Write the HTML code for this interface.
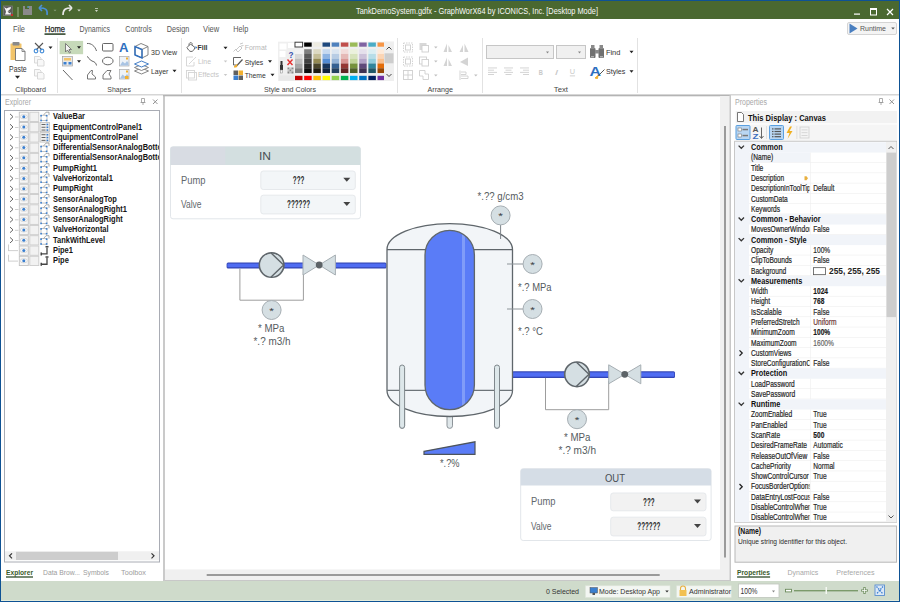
<!DOCTYPE html>
<html><head><meta charset="utf-8"><title>GraphWorX64</title>
<style>
html,body{margin:0;padding:0;width:900px;height:602px;overflow:hidden;background:#fff}
svg{display:block;font-family:"Liberation Sans",sans-serif}
</style></head><body>
<svg width="900" height="602" viewBox="0 0 900 602">
<rect x="0" y="0" width="900" height="602" fill="#0e5294" />
<rect x="1" y="1" width="898" height="18" fill="#4a6830" />
<rect x="1" y="19" width="898" height="582" fill="#ffffff" />
<text x="356" y="14.4" font-size="9.8" fill="#f8f8f8" font-weight="normal" textLength="242.0" lengthAdjust="spacingAndGlyphs" >TankDemoSystem.gdfx - GraphWorX64 by ICONICS, Inc. [Desktop Mode]</text>
<rect x="3.3" y="6" width="9" height="9.5" fill="#5a5a5a" stroke="#7a7a7a" stroke-width="0.8" />
<path d="M4,7 L6.5,8.5 L8.5,7.5 L11,7 L10.5,9 L8.5,10.5 L7.5,12 L9.5,11.5 L10.8,12.5 L10.8,14.5 L5,14.5 L6,12 L5.5,10 Z" fill="#f4f4f4" />
<path d="M8,12.5 L10.5,11 L10.5,13.5 Z" fill="#555" />
<circle cx="12" cy="15" r="1.1" fill="#e02020" />
<line x1="18" y1="7" x2="18" y2="17" stroke="#9fb58c" stroke-width="1" />
<path d="M23,6 L32,6 L32,15 L23,15 Z" fill="#8a8a8a" />
<rect x="25" y="6" width="4" height="3" fill="#4a6830" />
<rect x="27.5" y="6" width="1.2" height="2" fill="#5aa0e0" />
<path d="M47,15 C48,9 45,8 40,8" fill="none" stroke="#4a90d9" stroke-width="1.6" />
<path d="M39,8 L42,5 M39,8 L42,11" fill="none" stroke="#4a90d9" stroke-width="1.6" />
<path d="M53.5,9.75 L56.5,9.75 L55,11.25 Z" fill="#8aa07a" />
<path d="M63,15 C63,9 66,8 71,8" fill="none" stroke="#e8e8e8" stroke-width="1.6" />
<path d="M72,8 L69,5 M72,8 L69,11" fill="none" stroke="#e8e8e8" stroke-width="1.6" />
<path d="M77.25,9.5 L80.75,9.5 L79,11.5 Z" fill="#d0d8c8" />
<rect x="95" y="8" width="3" height="0.8" fill="#d0d8c8" />
<path d="M95.0,10.0 L98.0,10.0 L96.5,12.0 Z" fill="#d0d8c8" />
<rect x="854" y="13.5" width="6" height="1.2" fill="#ffffff" />
<rect x="870.5" y="8.5" width="6" height="6.5" fill="none" stroke="#ffffff" stroke-width="1" />
<rect x="870.5" y="8.5" width="6" height="1.5" fill="#ffffff" />
<path d="M887,9 L893,15 M893,9 L887,15" fill="none" stroke="#ffffff" stroke-width="1.2" />
<text x="13" y="31.7" font-size="8.6" fill="#555555" font-weight="normal" textLength="12.0" lengthAdjust="spacingAndGlyphs" >File</text>
<text x="44.8" y="31.7" font-size="8.6" fill="#1f1f1f" font-weight="normal" textLength="20.2" lengthAdjust="spacingAndGlyphs" stroke="#1f1f1f" stroke-width="0.25">Home</text>
<text x="79.5" y="31.7" font-size="8.6" fill="#555555" font-weight="normal" textLength="30.5" lengthAdjust="spacingAndGlyphs" >Dynamics</text>
<text x="125.3" y="31.7" font-size="8.6" fill="#555555" font-weight="normal" textLength="26.4" lengthAdjust="spacingAndGlyphs" >Controls</text>
<text x="166.7" y="31.7" font-size="8.6" fill="#555555" font-weight="normal" textLength="22.5" lengthAdjust="spacingAndGlyphs" >Design</text>
<text x="203" y="31.7" font-size="8.6" fill="#555555" font-weight="normal" textLength="16.2" lengthAdjust="spacingAndGlyphs" >View</text>
<text x="233.3" y="31.7" font-size="8.6" fill="#555555" font-weight="normal" textLength="15.0" lengthAdjust="spacingAndGlyphs" >Help</text>
<rect x="44.5" y="33.2" width="21" height="1.8" fill="#4a5c46" />
<rect x="847.5" y="22.5" width="49" height="12" fill="#f4f4f4" stroke="#d4d4d4" stroke-width="1" rx="1.5" />
<path d="M849.5,23.5 L857.5,28.5 L849.5,33.5 Z" fill="#4a7fc0" />
<text x="860" y="31.3" font-size="8" fill="#555" font-weight="normal" textLength="26.0" lengthAdjust="spacingAndGlyphs" >Runtime</text>
<path d="M891.25,27.5 L894.75,27.5 L893,29.5 Z" fill="#555" />
<rect x="1" y="94" width="898" height="1.5" fill="#d6d6d6" />
<rect x="57" y="38" width="1" height="55" fill="#e2e2e2" />
<rect x="181" y="38" width="1" height="55" fill="#e2e2e2" />
<rect x="397" y="38" width="1" height="55" fill="#e2e2e2" />
<rect x="482" y="38" width="1" height="55" fill="#e2e2e2" />
<rect x="637" y="38" width="1" height="55" fill="#e2e2e2" />
<text x="15.2" y="92" font-size="7.8" fill="#444" font-weight="normal" textLength="30.8" lengthAdjust="spacingAndGlyphs" >Clipboard</text>
<text x="107.3" y="92" font-size="7.8" fill="#444" font-weight="normal" textLength="23.6" lengthAdjust="spacingAndGlyphs" >Shapes</text>
<text x="264" y="92" font-size="7.8" fill="#444" font-weight="normal" textLength="52.0" lengthAdjust="spacingAndGlyphs" >Style and Colors</text>
<text x="427.5" y="92" font-size="7.8" fill="#444" font-weight="normal" textLength="25.5" lengthAdjust="spacingAndGlyphs" >Arrange</text>
<text x="553.8" y="92" font-size="7.8" fill="#444" font-weight="normal" textLength="14.2" lengthAdjust="spacingAndGlyphs" >Text</text>
<rect x="10.5" y="43.5" width="11" height="16.5" fill="#f2c46a" rx="0.5" />
<rect x="12.5" y="42" width="7" height="3.5" fill="#8a8a8a" rx="0.8" />
<path d="M15.5,48.5 L22,48.5 L25,51.5 L25,60.5 L15.5,60.5 Z" fill="#ffffff" stroke="#707070" stroke-width="0.9" />
<path d="M22,48.5 L22,51.5 L25,51.5" fill="none" stroke="#707070" stroke-width="0.8" />
<text x="9.1" y="72" font-size="9" fill="#333" font-weight="normal" textLength="17.6" lengthAdjust="spacingAndGlyphs" >Paste</text>
<path d="M15.0,75.8 L20.0,75.8 L17.5,78.8 Z" fill="#222" />
<path d="M35,43 L42,50 M43,43 L36,50" fill="none" stroke="#555" stroke-width="1.1" />
<circle cx="36" cy="51" r="1.8" fill="none" stroke="#4a90d9" stroke-width="1.2" />
<circle cx="42" cy="51" r="1.8" fill="none" stroke="#4a90d9" stroke-width="1.2" />
<path d="M48.5,46.45 L52.5,46.45 L50.5,48.95 Z" fill="#222" />
<path d="M34.5,56.5 L39.5,56.5 L41,58 L41,63 L34.5,63 Z" fill="#f8f8f8" stroke="#d0d0d0" stroke-width="0.8" />
<path d="M37.5,59.5 L42.5,59.5 L44,61 L44,66 L37.5,66 Z" fill="#f8f8f8" stroke="#d0d0d0" stroke-width="0.8" />
<path d="M34.5,69.5 L39.5,69.5 L41,71 L41,76 L34.5,76 Z" fill="#f8f8f8" stroke="#d0d0d0" stroke-width="0.8" />
<path d="M37.5,72.5 L42.5,72.5 L44,74 L44,79 L37.5,79 Z" fill="#f8f8f8" stroke="#d0d0d0" stroke-width="0.8" />
<rect x="59.6" y="40.9" width="23.5" height="13.3" fill="#c6d9b9" />
<path d="M65.5,43.5 L65.5,52 L67.5,50 L69.5,53 L70.5,52.5 L69,49.5 L71.5,49.5 Z" fill="#f4f4f4" stroke="#666" stroke-width="0.8" />
<path d="M77.0,46.35 L81.0,46.35 L79,48.85 Z" fill="#222" />
<rect x="62.5" y="56.5" width="10" height="9.5" fill="#e8e8e8" stroke="#a0a0a0" stroke-width="0.7" />
<rect x="64" y="58" width="7" height="2.5" fill="#f2c46a" />
<rect x="63.5" y="62" width="3" height="2.5" fill="#3a7fd0" />
<rect x="68.5" y="62" width="3" height="2.5" fill="#3a7fd0" />
<path d="M77.0,60.25 L81.0,60.25 L79,62.75 Z" fill="#222" />
<line x1="63" y1="70" x2="72.5" y2="80" stroke="#666" stroke-width="1" />
<path d="M87,43.5 C91,43 95,46 96.5,51" fill="none" stroke="#666" stroke-width="1" />
<path d="M87,56.5 C89,57 89,60 92,61 C95,62 96,63 96.5,65.5" fill="none" stroke="#666" stroke-width="1" />
<path d="M87.5,79 L87.5,75 L91,70.5 L92.5,70.5 L92,74 L95.5,77 L95.5,79 Z" fill="none" stroke="#666" stroke-width="0.9" />
<rect x="102.5" y="43.5" width="10.5" height="7.5" fill="none" stroke="#666" stroke-width="1" rx="1" />
<ellipse cx="107.8" cy="61" rx="5.3" ry="3.8" fill="none" stroke="#666" stroke-width="1"/>
<path d="M103,79 L103,75 L107,70.5 L111,70.5 L109,74 L111,77 L111,79 Z" fill="none" stroke="#666" stroke-width="0.9" />
<text x="119" y="52" font-size="12.5" fill="#2f6fbf" font-weight="bold" textLength="9.5" lengthAdjust="spacingAndGlyphs" >A</text>
<rect x="119.5" y="56.5" width="9.5" height="9.5" fill="#eef3f8" stroke="#a8a8a8" stroke-width="0.7" />
<path d="M120,65.5 L122.5,61.5 L125,63.5 L127,61 L128.5,63 L128.5,65.5 Z" fill="#a9c4e4" />
<rect x="126" y="57.5" width="2" height="2" fill="#f2b030" />
<rect x="119.5" y="69.5" width="9.5" height="9.5" fill="#eef3f8" stroke="#a8a8a8" stroke-width="0.7" />
<path d="M120,78.5 L122.5,74.5 L125,76.5 L127,74 L128.5,76 L128.5,78.5 Z" fill="#a9c4e4" />
<rect x="126" y="70.5" width="2" height="2" fill="#f2b030" />
<rect x="125" y="76" width="3.5" height="3" fill="#f2b030" />
<path d="M135,46.5 L141,43.5 L148,46.5 L148,55 L142,58 L135,55 Z" fill="#fff" stroke="#777" stroke-width="0.9" />
<path d="M135,46.5 L142,49.5 L148,46.5 M142,49.5 L142,58" fill="none" stroke="#777" stroke-width="0.9" />
<path d="M135,46.5 L135,55 L142,58 L142,49.5 Z" fill="none" stroke="#2f6fbf" stroke-width="1.4" />
<text x="151" y="54.5" font-size="7.8" fill="#333" font-weight="normal" textLength="26.0" lengthAdjust="spacingAndGlyphs" >3D View</text>
<path d="M134.5,71.0 L141.5,68.0 L148.5,71.0 L141.5,74.0 Z" fill="#fff" stroke="#777" stroke-width="0.9" />
<path d="M134.5,67.5 L141.5,64.5 L148.5,67.5 L141.5,70.5 Z" fill="#fff" stroke="#777" stroke-width="0.9" />
<path d="M134.5,64.0 L141.5,61.0 L148.5,64.0 L141.5,67.0 Z" fill="#fff" stroke="#2f6fbf" stroke-width="0.9" />
<text x="151" y="74" font-size="7.8" fill="#333" font-weight="normal" textLength="17.3" lengthAdjust="spacingAndGlyphs" >Layer</text>
<path d="M172.5,69.75 L176.5,69.75 L174.5,72.25 Z" fill="#222" />
<path d="M187,47.5 L190.5,44 L195,47.5 C194,50 193,51.5 191,51.5 C189.5,51.5 188,49.5 187,47.5 Z" fill="#fff" stroke="#555" stroke-width="0.9" />
<path d="M189,45.5 C188.5,42 192,41.5 192.5,44.5" fill="none" stroke="#555" stroke-width="0.8" />
<path d="M195.5,46 L197.5,47.5 L195.5,49 Z" fill="#3a7fd0" />
<text x="197.5" y="50" font-size="7.8" fill="#333" font-weight="bold" textLength="10.0" lengthAdjust="spacingAndGlyphs" >Fill</text>
<path d="M223.5,46.75 L227.5,46.75 L225.5,49.25 Z" fill="#222" />
<path d="M186.5,57 L193,57 M186.5,57 L186.5,66 L194,66 L194,62 M189,64 L196,57" fill="none" stroke="#d4d4d4" stroke-width="0.9" />
<text x="198" y="63.8" font-size="7.8" fill="#c4c4c4" font-weight="normal" textLength="13.0" lengthAdjust="spacingAndGlyphs" >Line</text>
<path d="M223.75,60.5 L227.25,60.5 L225.5,62.5 Z" fill="#c8c8c8" />
<rect x="186.5" y="70.5" width="8" height="7.5" fill="none" stroke="#d4d4d4" stroke-width="0.9" />
<rect x="188.5" y="72.5" width="8" height="7.5" fill="none" stroke="#d4d4d4" stroke-width="0.9" />
<text x="198" y="77.3" font-size="7.8" fill="#c4c4c4" font-weight="normal" textLength="21.0" lengthAdjust="spacingAndGlyphs" >Effects</text>
<path d="M223.75,74.0 L227.25,74.0 L225.5,76.0 Z" fill="#c8c8c8" />
<path d="M233.5,51.5 L236,49 M236,50 L240,46 L242,48 L238,52 Z M240,44 L243,43 M241,46 L243.5,45.5" fill="none" stroke="#c8c8c8" stroke-width="1" />
<text x="244.7" y="49.8" font-size="7.8" fill="#b8b8b8" font-weight="normal" textLength="22.0" lengthAdjust="spacingAndGlyphs" >Format</text>
<path d="M233.5,57.5 L241,57.5 M233.5,57.5 L233.5,65 L236,65" fill="none" stroke="#555" stroke-width="0.9" />
<path d="M236,66.5 L242.5,59.5" fill="none" stroke="#555" stroke-width="1.2" />
<path d="M234,67 L237,64.5 L236.5,67 Z" fill="#f2b030" stroke="#f2b030" stroke-width="1" />
<text x="244.7" y="64.6" font-size="7.8" fill="#333" font-weight="normal" textLength="18.6" lengthAdjust="spacingAndGlyphs" >Styles</text>
<path d="M268.0,60.25 L272.0,60.25 L270,62.75 Z" fill="#222" />
<rect x="233.5" y="70.5" width="4.5" height="4.5" fill="#606060" />
<rect x="238.5" y="70.5" width="4.5" height="4.5" fill="#f2b030" />
<rect x="233.5" y="75.5" width="4.5" height="4.5" fill="#3a7fd0" />
<rect x="238.5" y="75.5" width="4.5" height="4.5" fill="#606060" />
<text x="244.7" y="78.1" font-size="7.8" fill="#333" font-weight="normal" textLength="21.1" lengthAdjust="spacingAndGlyphs" >Theme</text>
<path d="M270.5,73.75 L274.5,73.75 L272.5,76.25 Z" fill="#222" />
<rect x="278" y="41.7" width="116" height="39.3" fill="#efefef" />
<rect x="279.5" y="43.5" width="7" height="6" fill="#fff" />
<rect x="288" y="43" width="6" height="5" fill="#fff" />
<rect x="279.5" y="51" width="6" height="6" fill="#fff" />
<text x="288.5" y="57.5" font-size="9" fill="#3a4fb0" font-weight="bold" textLength="5.0" lengthAdjust="spacingAndGlyphs" >?</text>
<path d="M280.5,61 L282.5,61 L282.5,65 L283,65 L283,70 L280,70 L280,65 L280.5,65 Z" fill="#333" />
<rect x="280.5" y="70" width="2" height="3" fill="#f8f8f8" stroke="#888" stroke-width="0.5" />
<path d="M287.5,59.5 L292.5,65 M292.5,59.5 L287.5,65" fill="none" stroke="#e53030" stroke-width="1.4" />
<rect x="287.5" y="67.5" width="2" height="2" fill="#8a8a8a" />
<rect x="287.5" y="69.5" width="2" height="2" fill="#c8c8c8" />
<rect x="287.5" y="71.5" width="2" height="2" fill="#8a8a8a" />
<rect x="289.5" y="67.5" width="2" height="2" fill="#c8c8c8" />
<rect x="289.5" y="69.5" width="2" height="2" fill="#8a8a8a" />
<rect x="289.5" y="71.5" width="2" height="2" fill="#c8c8c8" />
<rect x="291.5" y="67.5" width="2" height="2" fill="#8a8a8a" />
<rect x="291.5" y="69.5" width="2" height="2" fill="#c8c8c8" />
<rect x="291.5" y="71.5" width="2" height="2" fill="#8a8a8a" />
<rect x="279" y="75.5" width="15" height="5" fill="#e8e8e8" />
<rect x="295.0" y="42.5" width="7.5" height="4.2" fill="#ffffff" />
<rect x="295.0" y="49.2" width="7.5" height="4.8" fill="#f2f2f2" />
<rect x="295.0" y="53.96" width="7.5" height="4.8" fill="#d9d9d9" />
<rect x="295.0" y="58.72" width="7.5" height="4.8" fill="#bfbfbf" />
<rect x="295.0" y="63.480000000000004" width="7.5" height="4.8" fill="#a6a6a6" />
<rect x="295.0" y="68.24000000000001" width="7.5" height="4.8" fill="#808080" />
<rect x="295.0" y="75.8" width="7.5" height="4.3" fill="#c00000" />
<rect x="304.17" y="42.5" width="7.5" height="4.2" fill="#000000" />
<rect x="304.17" y="49.2" width="7.5" height="4.8" fill="#7f7f7f" />
<rect x="304.17" y="53.96" width="7.5" height="4.8" fill="#595959" />
<rect x="304.17" y="58.72" width="7.5" height="4.8" fill="#404040" />
<rect x="304.17" y="63.480000000000004" width="7.5" height="4.8" fill="#262626" />
<rect x="304.17" y="68.24000000000001" width="7.5" height="4.8" fill="#0d0d0d" />
<rect x="304.17" y="75.8" width="7.5" height="4.3" fill="#ff0000" />
<rect x="313.34" y="42.5" width="7.5" height="4.2" fill="#eeece1" />
<rect x="313.34" y="49.2" width="7.5" height="4.8" fill="#ddd9c3" />
<rect x="313.34" y="53.96" width="7.5" height="4.8" fill="#c4bd97" />
<rect x="313.34" y="58.72" width="7.5" height="4.8" fill="#948a54" />
<rect x="313.34" y="63.480000000000004" width="7.5" height="4.8" fill="#4a452a" />
<rect x="313.34" y="68.24000000000001" width="7.5" height="4.8" fill="#1d1b10" />
<rect x="313.34" y="75.8" width="7.5" height="4.3" fill="#ffc000" />
<rect x="322.51" y="42.5" width="7.5" height="4.2" fill="#1f497d" />
<rect x="322.51" y="49.2" width="7.5" height="4.8" fill="#c6d9f0" />
<rect x="322.51" y="53.96" width="7.5" height="4.8" fill="#8db3e2" />
<rect x="322.51" y="58.72" width="7.5" height="4.8" fill="#548dd4" />
<rect x="322.51" y="63.480000000000004" width="7.5" height="4.8" fill="#17365d" />
<rect x="322.51" y="68.24000000000001" width="7.5" height="4.8" fill="#0f243e" />
<rect x="322.51" y="75.8" width="7.5" height="4.3" fill="#ffff00" />
<rect x="331.68" y="42.5" width="7.5" height="4.2" fill="#4f81bd" />
<rect x="331.68" y="49.2" width="7.5" height="4.8" fill="#dbe5f1" />
<rect x="331.68" y="53.96" width="7.5" height="4.8" fill="#b8cce4" />
<rect x="331.68" y="58.72" width="7.5" height="4.8" fill="#95b3d7" />
<rect x="331.68" y="63.480000000000004" width="7.5" height="4.8" fill="#366092" />
<rect x="331.68" y="68.24000000000001" width="7.5" height="4.8" fill="#244061" />
<rect x="331.68" y="75.8" width="7.5" height="4.3" fill="#92d050" />
<rect x="340.85" y="42.5" width="7.5" height="4.2" fill="#c0504d" />
<rect x="340.85" y="49.2" width="7.5" height="4.8" fill="#f2dcdb" />
<rect x="340.85" y="53.96" width="7.5" height="4.8" fill="#e5b9b7" />
<rect x="340.85" y="58.72" width="7.5" height="4.8" fill="#d99694" />
<rect x="340.85" y="63.480000000000004" width="7.5" height="4.8" fill="#953734" />
<rect x="340.85" y="68.24000000000001" width="7.5" height="4.8" fill="#632423" />
<rect x="340.85" y="75.8" width="7.5" height="4.3" fill="#00b050" />
<rect x="350.02" y="42.5" width="7.5" height="4.2" fill="#9bbb59" />
<rect x="350.02" y="49.2" width="7.5" height="4.8" fill="#ebf1dd" />
<rect x="350.02" y="53.96" width="7.5" height="4.8" fill="#d7e3bc" />
<rect x="350.02" y="58.72" width="7.5" height="4.8" fill="#c3d69b" />
<rect x="350.02" y="63.480000000000004" width="7.5" height="4.8" fill="#76923c" />
<rect x="350.02" y="68.24000000000001" width="7.5" height="4.8" fill="#4f6128" />
<rect x="350.02" y="75.8" width="7.5" height="4.3" fill="#00b0f0" />
<rect x="359.19" y="42.5" width="7.5" height="4.2" fill="#8064a2" />
<rect x="359.19" y="49.2" width="7.5" height="4.8" fill="#e5e0ec" />
<rect x="359.19" y="53.96" width="7.5" height="4.8" fill="#ccc1d9" />
<rect x="359.19" y="58.72" width="7.5" height="4.8" fill="#b2a2c7" />
<rect x="359.19" y="63.480000000000004" width="7.5" height="4.8" fill="#5f497a" />
<rect x="359.19" y="68.24000000000001" width="7.5" height="4.8" fill="#3f3151" />
<rect x="359.19" y="75.8" width="7.5" height="4.3" fill="#0070c0" />
<rect x="368.36" y="42.5" width="7.5" height="4.2" fill="#4bacc6" />
<rect x="368.36" y="49.2" width="7.5" height="4.8" fill="#dbeef3" />
<rect x="368.36" y="53.96" width="7.5" height="4.8" fill="#b7dde8" />
<rect x="368.36" y="58.72" width="7.5" height="4.8" fill="#92cddc" />
<rect x="368.36" y="63.480000000000004" width="7.5" height="4.8" fill="#31859b" />
<rect x="368.36" y="68.24000000000001" width="7.5" height="4.8" fill="#205867" />
<rect x="368.36" y="75.8" width="7.5" height="4.3" fill="#002060" />
<rect x="377.53" y="42.5" width="7.5" height="4.2" fill="#f79646" />
<rect x="377.53" y="49.2" width="7.5" height="4.8" fill="#fdeada" />
<rect x="377.53" y="53.96" width="7.5" height="4.8" fill="#fbd5b5" />
<rect x="377.53" y="58.72" width="7.5" height="4.8" fill="#fac08f" />
<rect x="377.53" y="63.480000000000004" width="7.5" height="4.8" fill="#e36c09" />
<rect x="377.53" y="68.24000000000001" width="7.5" height="4.8" fill="#974806" />
<rect x="377.53" y="75.8" width="7.5" height="4.3" fill="#7030a0" />
<rect x="295" y="42.2" width="7.6" height="4.8" fill="none" stroke="#333" stroke-width="0.9" />
<rect x="384" y="41.7" width="10" height="39.3" fill="#efefef" />
<path d="M386.5,49.5 L389,47 L391.5,49.5" fill="none" stroke="#333" stroke-width="0.9" />
<rect x="384.5" y="53.3" width="9" height="10" fill="#cdcdcd" />
<path d="M386.5,74 L389,76.5 L391.5,74" fill="none" stroke="#333" stroke-width="0.9" />
<rect x="403.5" y="43" width="9" height="9" fill="none" stroke="#cfcfcf" stroke-width="0.9" stroke-dasharray="1.5,1"/>
<rect x="405.5" y="45" width="5" height="5" fill="none" stroke="#cfcfcf" stroke-width="0.9" />
<rect x="403.5" y="57" width="9" height="9" fill="none" stroke="#cfcfcf" stroke-width="0.9" stroke-dasharray="1.5,1"/>
<rect x="405.5" y="59" width="5" height="5" fill="none" stroke="#cfcfcf" stroke-width="0.9" />
<rect x="403.5" y="70.5" width="9" height="9" fill="none" stroke="#cfcfcf" stroke-width="0.9" />
<line x1="408" y1="71" x2="408" y2="79" stroke="#cfcfcf" stroke-width="0.9" />
<line x1="404" y1="75" x2="412" y2="75" stroke="#cfcfcf" stroke-width="0.9" />
<rect x="419.5" y="43" width="7" height="7" fill="#d8d8d8" />
<rect x="422" y="45.5" width="6.5" height="6.5" fill="#fff" stroke="#cfcfcf" stroke-width="0.9" />
<rect x="419.5" y="57" width="7" height="7" fill="none" stroke="#cfcfcf" stroke-width="0.9" />
<rect x="422" y="59.5" width="6.5" height="6.5" fill="#fff" stroke="#cfcfcf" stroke-width="0.9" />
<path d="M419.5,70.5 L425,70.5 L425,74 L428.5,74 L428.5,79.5 L423,79.5 L423,76 L419.5,76 Z" fill="none" stroke="#cfcfcf" stroke-width="0.9" />
<path d="M434.05,46.5 L437.55,46.5 L435.8,48.5 Z" fill="#c0c0c0" />
<path d="M434.05,60.5 L437.55,60.5 L435.8,62.5 Z" fill="#c0c0c0" />
<path d="M434.05,74.5 L437.55,74.5 L435.8,76.5 Z" fill="#c0c0c0" />
<path d="M447,43.5 L447,52 L443.5,52 Z M448.5,45 L452,52 L448.5,52 Z" fill="#d4d4d4" />
<path d="M463,45 L463,52 L459.5,52 Z M464.5,43.5 L468.5,52 L464.5,52 Z" fill="#d4d4d4" />
<path d="M447,57.5 L447,66 L443.5,66 Z M448.5,59 L452,66 L448.5,66 Z" fill="#d4d4d4" />
<path d="M468,57.5 L468,66 L460,62 Z" fill="#d4d4d4" />
<path d="M460,70.5 L460,80 M461,72 L466,72 L466,74.5 L461,74.5 M461,76 L468,76 L468,78.5 L461,78.5" fill="none" stroke="#cfcfcf" stroke-width="0.9" />
<path d="M474.05,74.5 L477.55,74.5 L475.8,76.5 Z" fill="#c0c0c0" />
<rect x="486.5" y="45.5" width="67" height="13" fill="#f0f0f0" stroke="#c6c6c6" stroke-width="1" />
<path d="M546.0,51.6 L549.0,51.6 L547.5,53.4 Z" fill="#888" />
<rect x="556.5" y="45.5" width="29" height="13" fill="#f0f0f0" stroke="#c6c6c6" stroke-width="1" />
<path d="M578.0,51.6 L581.0,51.6 L579.5,53.4 Z" fill="#888" />
<rect x="488" y="67.5" width="9" height="0.9" fill="#d0d0d0" />
<rect x="488" y="69.7" width="6" height="0.9" fill="#d0d0d0" />
<rect x="488" y="71.9" width="9" height="0.9" fill="#d0d0d0" />
<rect x="488" y="74.1" width="6" height="0.9" fill="#d0d0d0" />
<rect x="504.0" y="67.5" width="9" height="0.9" fill="#d0d0d0" />
<rect x="505.5" y="69.7" width="6" height="0.9" fill="#d0d0d0" />
<rect x="504.0" y="71.9" width="9" height="0.9" fill="#d0d0d0" />
<rect x="505.5" y="74.1" width="6" height="0.9" fill="#d0d0d0" />
<rect x="520" y="67.5" width="9" height="0.9" fill="#d0d0d0" />
<rect x="523" y="69.7" width="6" height="0.9" fill="#d0d0d0" />
<rect x="520" y="71.9" width="9" height="0.9" fill="#d0d0d0" />
<rect x="523" y="74.1" width="6" height="0.9" fill="#d0d0d0" />
<text x="538.7" y="75" font-size="8" fill="#c8c8c8" font-weight="bold" textLength="4.1" lengthAdjust="spacingAndGlyphs" >B</text>
<text x="554.7" y="75" font-size="8" fill="#c8c8c8" font-weight="normal" textLength="3.5" lengthAdjust="spacingAndGlyphs" font-style="italic">I</text>
<text x="569.8" y="74" font-size="8" fill="#c8c8c8" font-weight="normal" textLength="5.3" lengthAdjust="spacingAndGlyphs" >U</text>
<rect x="569.8" y="75.5" width="5.3" height="0.8" fill="#c8c8c8" />
<rect x="590" y="48" width="5.5" height="10" fill="#707070" rx="1" />
<rect x="598.5" y="48" width="5.5" height="10" fill="#707070" rx="1" />
<rect x="591" y="45" width="3.5" height="4" fill="#8a8a8a" />
<rect x="599.5" y="45" width="3.5" height="4" fill="#8a8a8a" />
<rect x="595" y="50" width="4" height="3.5" fill="#8a8a8a" />
<rect x="591" y="56" width="3" height="1.5" fill="#b0b0b0" />
<rect x="600" y="56" width="3" height="1.5" fill="#b0b0b0" />
<text x="605.9" y="54.6" font-size="7.8" fill="#333" font-weight="normal" textLength="14.5" lengthAdjust="spacingAndGlyphs" >Find</text>
<path d="M629.5,50.75 L633.5,50.75 L631.5,53.25 Z" fill="#222" />
<text x="589.5" y="76" font-size="13.5" fill="#2f6fbf" font-weight="bold" textLength="11.5" lengthAdjust="spacingAndGlyphs" >A</text>
<path d="M597,77 L604.5,69.5" fill="none" stroke="#555" stroke-width="1" />
<path d="M595,78 L598,75.5 L597.5,78.5 Z" fill="#f2b030" stroke="#f2b030" stroke-width="1" />
<text x="605.9" y="74.1" font-size="7.8" fill="#333" font-weight="normal" textLength="19.5" lengthAdjust="spacingAndGlyphs" >Styles</text>
<path d="M629.5,70.25 L633.5,70.25 L631.5,72.75 Z" fill="#222" />
<text x="5" y="104.7" font-size="8.5" fill="#a8a8a8" font-weight="normal" textLength="26.0" lengthAdjust="spacingAndGlyphs" >Explorer</text>
<path d="M141.5,98.5 L144.5,98.5 L144.5,102.5 L141.5,102.5 Z M140.5,102.5 L145.5,102.5 M143,102.5 L143,105" fill="none" stroke="#999" stroke-width="0.8" />
<path d="M153,99.5 L157.5,104 M157.5,99.5 L153,104" fill="none" stroke="#888" stroke-width="0.9" />
<rect x="4.5" y="110.5" width="155" height="451.5" fill="#fff" stroke="#a9acb4" stroke-width="1" />
<clipPath id="treeclip"><rect x="5" y="111" width="154" height="440"/></clipPath>
<g clip-path="url(#treeclip)">
<path d="M10,113.9 L13,116.7 L10,119.5" fill="none" stroke="#666" stroke-width="1" />
<rect x="15" y="116.7" width="3.5" height="0.6" fill="#b0b0b0" />
<rect x="19.3" y="112.2" width="9" height="9.3" fill="#f6f6f6" stroke="#c2c2c2" stroke-width="0.9" />
<ellipse cx="23.8" cy="116.7" rx="3.6" ry="2.1" fill="#fafafa" stroke="#c4c4c4" stroke-width="0.6"/>
<circle cx="23.8" cy="116.7" r="1.5" fill="#3a7fd0" />
<rect x="29.8" y="112.2" width="9" height="9.3" fill="#f2f2f2" stroke="#cbcbcb" stroke-width="0.9" />
<path d="M43,115.7 L46,112.2 L49,112.2 L49,115.2" fill="none" stroke="#888" stroke-width="0.7" />
<rect x="41" y="115.2" width="6" height="5.5" fill="#fff" stroke="#999" stroke-width="0.6" />
<rect x="40.3" y="114.9" width="1.6" height="1.6" fill="#3a7fd0" />
<rect x="45.8" y="114.9" width="1.6" height="1.6" fill="#3a7fd0" />
<rect x="40.3" y="119.7" width="1.6" height="1.6" fill="#3a7fd0" />
<rect x="45.8" y="119.7" width="1.6" height="1.6" fill="#3a7fd0" />
<text x="53" y="119.3" font-size="9" fill="#151515" font-weight="bold" textLength="32.0" lengthAdjust="spacingAndGlyphs" >ValueBar</text>
<path d="M10,124.19000000000001 L13,126.99000000000001 L10,129.79000000000002" fill="none" stroke="#666" stroke-width="1" />
<rect x="15" y="126.99000000000001" width="3.5" height="0.6" fill="#b0b0b0" />
<rect x="19.3" y="122.49000000000001" width="9" height="9.3" fill="#f6f6f6" stroke="#c2c2c2" stroke-width="0.9" />
<ellipse cx="23.8" cy="126.99000000000001" rx="3.6" ry="2.1" fill="#fafafa" stroke="#c4c4c4" stroke-width="0.6"/>
<circle cx="23.8" cy="126.99000000000001" r="1.5" fill="#3a7fd0" />
<rect x="29.8" y="122.49000000000001" width="9" height="9.3" fill="#f2f2f2" stroke="#cbcbcb" stroke-width="0.9" />
<rect x="40" y="122.49000000000001" width="9.5" height="9.3" fill="#f0f0f0" stroke="#aaa" stroke-width="0.6" />
<rect x="41.5" y="123.99000000000001" width="4" height="0.9" fill="#555" />
<rect x="46.5" y="123.69000000000001" width="1.8" height="1.6" fill="#3a7fd0" />
<rect x="41.5" y="126.79" width="4" height="0.9" fill="#555" />
<rect x="46.5" y="126.49000000000001" width="1.8" height="1.6" fill="#3a7fd0" />
<rect x="41.5" y="129.59" width="4" height="0.9" fill="#555" />
<rect x="46.5" y="129.29000000000002" width="1.8" height="1.6" fill="#3a7fd0" />
<text x="53" y="129.59" font-size="9" fill="#151515" font-weight="bold" textLength="89.2" lengthAdjust="spacingAndGlyphs" >EquipmentControlPanel1</text>
<path d="M10,134.48 L13,137.28 L10,140.08" fill="none" stroke="#666" stroke-width="1" />
<rect x="15" y="137.28" width="3.5" height="0.6" fill="#b0b0b0" />
<rect x="19.3" y="132.78" width="9" height="9.3" fill="#f6f6f6" stroke="#c2c2c2" stroke-width="0.9" />
<ellipse cx="23.8" cy="137.28" rx="3.6" ry="2.1" fill="#fafafa" stroke="#c4c4c4" stroke-width="0.6"/>
<circle cx="23.8" cy="137.28" r="1.5" fill="#3a7fd0" />
<rect x="29.8" y="132.78" width="9" height="9.3" fill="#f2f2f2" stroke="#cbcbcb" stroke-width="0.9" />
<rect x="40" y="132.78" width="9.5" height="9.3" fill="#f0f0f0" stroke="#aaa" stroke-width="0.6" />
<rect x="41.5" y="134.28" width="4" height="0.9" fill="#555" />
<rect x="46.5" y="133.98" width="1.8" height="1.6" fill="#3a7fd0" />
<rect x="41.5" y="137.08" width="4" height="0.9" fill="#555" />
<rect x="46.5" y="136.78" width="1.8" height="1.6" fill="#3a7fd0" />
<rect x="41.5" y="139.88" width="4" height="0.9" fill="#555" />
<rect x="46.5" y="139.57999999999998" width="1.8" height="1.6" fill="#3a7fd0" />
<text x="53" y="139.88" font-size="9" fill="#151515" font-weight="bold" textLength="85.1" lengthAdjust="spacingAndGlyphs" >EquipmentControlPanel</text>
<path d="M10,144.76999999999998 L13,147.57 L10,150.37" fill="none" stroke="#666" stroke-width="1" />
<rect x="15" y="147.57" width="3.5" height="0.6" fill="#b0b0b0" />
<rect x="19.3" y="143.07" width="9" height="9.3" fill="#f6f6f6" stroke="#c2c2c2" stroke-width="0.9" />
<ellipse cx="23.8" cy="147.57" rx="3.6" ry="2.1" fill="#fafafa" stroke="#c4c4c4" stroke-width="0.6"/>
<circle cx="23.8" cy="147.57" r="1.5" fill="#3a7fd0" />
<rect x="29.8" y="143.07" width="9" height="9.3" fill="#f2f2f2" stroke="#cbcbcb" stroke-width="0.9" />
<path d="M43,146.57 L46,143.07 L49,143.07 L49,146.07" fill="none" stroke="#888" stroke-width="0.7" />
<rect x="41" y="146.07" width="6" height="5.5" fill="#fff" stroke="#999" stroke-width="0.6" />
<rect x="40.3" y="145.76999999999998" width="1.6" height="1.6" fill="#3a7fd0" />
<rect x="45.8" y="145.76999999999998" width="1.6" height="1.6" fill="#3a7fd0" />
<rect x="40.3" y="150.57" width="1.6" height="1.6" fill="#3a7fd0" />
<rect x="45.8" y="150.57" width="1.6" height="1.6" fill="#3a7fd0" />
<text x="53" y="150.17" font-size="9" fill="#151515" font-weight="bold" textLength="115.8" lengthAdjust="spacingAndGlyphs" >DifferentialSensorAnalogBottom</text>
<path d="M10,155.06 L13,157.86 L10,160.66000000000003" fill="none" stroke="#666" stroke-width="1" />
<rect x="15" y="157.86" width="3.5" height="0.6" fill="#b0b0b0" />
<rect x="19.3" y="153.36" width="9" height="9.3" fill="#f6f6f6" stroke="#c2c2c2" stroke-width="0.9" />
<ellipse cx="23.8" cy="157.86" rx="3.6" ry="2.1" fill="#fafafa" stroke="#c4c4c4" stroke-width="0.6"/>
<circle cx="23.8" cy="157.86" r="1.5" fill="#3a7fd0" />
<rect x="29.8" y="153.36" width="9" height="9.3" fill="#f2f2f2" stroke="#cbcbcb" stroke-width="0.9" />
<path d="M43,156.86 L46,153.36 L49,153.36 L49,156.36" fill="none" stroke="#888" stroke-width="0.7" />
<rect x="41" y="156.36" width="6" height="5.5" fill="#fff" stroke="#999" stroke-width="0.6" />
<rect x="40.3" y="156.06" width="1.6" height="1.6" fill="#3a7fd0" />
<rect x="45.8" y="156.06" width="1.6" height="1.6" fill="#3a7fd0" />
<rect x="40.3" y="160.86" width="1.6" height="1.6" fill="#3a7fd0" />
<rect x="45.8" y="160.86" width="1.6" height="1.6" fill="#3a7fd0" />
<text x="53" y="160.46" font-size="9" fill="#151515" font-weight="bold" textLength="115.8" lengthAdjust="spacingAndGlyphs" >DifferentialSensorAnalogBottom</text>
<path d="M10,165.35 L13,168.15 L10,170.95000000000002" fill="none" stroke="#666" stroke-width="1" />
<rect x="15" y="168.15" width="3.5" height="0.6" fill="#b0b0b0" />
<rect x="19.3" y="163.65" width="9" height="9.3" fill="#f6f6f6" stroke="#c2c2c2" stroke-width="0.9" />
<ellipse cx="23.8" cy="168.15" rx="3.6" ry="2.1" fill="#fafafa" stroke="#c4c4c4" stroke-width="0.6"/>
<circle cx="23.8" cy="168.15" r="1.5" fill="#3a7fd0" />
<rect x="29.8" y="163.65" width="9" height="9.3" fill="#f2f2f2" stroke="#cbcbcb" stroke-width="0.9" />
<path d="M43,167.15 L46,163.65 L49,163.65 L49,166.65" fill="none" stroke="#888" stroke-width="0.7" />
<rect x="41" y="166.65" width="6" height="5.5" fill="#fff" stroke="#999" stroke-width="0.6" />
<rect x="40.3" y="166.35" width="1.6" height="1.6" fill="#3a7fd0" />
<rect x="45.8" y="166.35" width="1.6" height="1.6" fill="#3a7fd0" />
<rect x="40.3" y="171.15" width="1.6" height="1.6" fill="#3a7fd0" />
<rect x="45.8" y="171.15" width="1.6" height="1.6" fill="#3a7fd0" />
<text x="53" y="170.75" font-size="9" fill="#151515" font-weight="bold" textLength="44.0" lengthAdjust="spacingAndGlyphs" >PumpRight1</text>
<path d="M10,175.64 L13,178.44 L10,181.24" fill="none" stroke="#666" stroke-width="1" />
<rect x="15" y="178.44" width="3.5" height="0.6" fill="#b0b0b0" />
<rect x="19.3" y="173.94" width="9" height="9.3" fill="#f6f6f6" stroke="#c2c2c2" stroke-width="0.9" />
<ellipse cx="23.8" cy="178.44" rx="3.6" ry="2.1" fill="#fafafa" stroke="#c4c4c4" stroke-width="0.6"/>
<circle cx="23.8" cy="178.44" r="1.5" fill="#3a7fd0" />
<rect x="29.8" y="173.94" width="9" height="9.3" fill="#f2f2f2" stroke="#cbcbcb" stroke-width="0.9" />
<path d="M43,177.44 L46,173.94 L49,173.94 L49,176.94" fill="none" stroke="#888" stroke-width="0.7" />
<rect x="41" y="176.94" width="6" height="5.5" fill="#fff" stroke="#999" stroke-width="0.6" />
<rect x="40.3" y="176.64" width="1.6" height="1.6" fill="#3a7fd0" />
<rect x="45.8" y="176.64" width="1.6" height="1.6" fill="#3a7fd0" />
<rect x="40.3" y="181.44" width="1.6" height="1.6" fill="#3a7fd0" />
<rect x="45.8" y="181.44" width="1.6" height="1.6" fill="#3a7fd0" />
<text x="53" y="181.04" font-size="9" fill="#151515" font-weight="bold" textLength="59.8" lengthAdjust="spacingAndGlyphs" >ValveHorizontal1</text>
<path d="M10,185.93 L13,188.73000000000002 L10,191.53000000000003" fill="none" stroke="#666" stroke-width="1" />
<rect x="15" y="188.73000000000002" width="3.5" height="0.6" fill="#b0b0b0" />
<rect x="19.3" y="184.23000000000002" width="9" height="9.3" fill="#f6f6f6" stroke="#c2c2c2" stroke-width="0.9" />
<ellipse cx="23.8" cy="188.73000000000002" rx="3.6" ry="2.1" fill="#fafafa" stroke="#c4c4c4" stroke-width="0.6"/>
<circle cx="23.8" cy="188.73000000000002" r="1.5" fill="#3a7fd0" />
<rect x="29.8" y="184.23000000000002" width="9" height="9.3" fill="#f2f2f2" stroke="#cbcbcb" stroke-width="0.9" />
<path d="M43,187.73000000000002 L46,184.23000000000002 L49,184.23000000000002 L49,187.23000000000002" fill="none" stroke="#888" stroke-width="0.7" />
<rect x="41" y="187.23000000000002" width="6" height="5.5" fill="#fff" stroke="#999" stroke-width="0.6" />
<rect x="40.3" y="186.93" width="1.6" height="1.6" fill="#3a7fd0" />
<rect x="45.8" y="186.93" width="1.6" height="1.6" fill="#3a7fd0" />
<rect x="40.3" y="191.73000000000002" width="1.6" height="1.6" fill="#3a7fd0" />
<rect x="45.8" y="191.73000000000002" width="1.6" height="1.6" fill="#3a7fd0" />
<text x="53" y="191.33" font-size="9" fill="#151515" font-weight="bold" textLength="39.8" lengthAdjust="spacingAndGlyphs" >PumpRight</text>
<path d="M10,196.21999999999997 L13,199.01999999999998 L10,201.82" fill="none" stroke="#666" stroke-width="1" />
<rect x="15" y="199.01999999999998" width="3.5" height="0.6" fill="#b0b0b0" />
<rect x="19.3" y="194.51999999999998" width="9" height="9.3" fill="#f6f6f6" stroke="#c2c2c2" stroke-width="0.9" />
<ellipse cx="23.8" cy="199.01999999999998" rx="3.6" ry="2.1" fill="#fafafa" stroke="#c4c4c4" stroke-width="0.6"/>
<circle cx="23.8" cy="199.01999999999998" r="1.5" fill="#3a7fd0" />
<rect x="29.8" y="194.51999999999998" width="9" height="9.3" fill="#f2f2f2" stroke="#cbcbcb" stroke-width="0.9" />
<path d="M43,198.01999999999998 L46,194.51999999999998 L49,194.51999999999998 L49,197.51999999999998" fill="none" stroke="#888" stroke-width="0.7" />
<rect x="41" y="197.51999999999998" width="6" height="5.5" fill="#fff" stroke="#999" stroke-width="0.6" />
<rect x="40.3" y="197.21999999999997" width="1.6" height="1.6" fill="#3a7fd0" />
<rect x="45.8" y="197.21999999999997" width="1.6" height="1.6" fill="#3a7fd0" />
<rect x="40.3" y="202.01999999999998" width="1.6" height="1.6" fill="#3a7fd0" />
<rect x="45.8" y="202.01999999999998" width="1.6" height="1.6" fill="#3a7fd0" />
<text x="53" y="201.61999999999998" font-size="9" fill="#151515" font-weight="bold" textLength="63.8" lengthAdjust="spacingAndGlyphs" >SensorAnalogTop</text>
<path d="M10,206.51 L13,209.31 L10,212.11" fill="none" stroke="#666" stroke-width="1" />
<rect x="15" y="209.31" width="3.5" height="0.6" fill="#b0b0b0" />
<rect x="19.3" y="204.81" width="9" height="9.3" fill="#f6f6f6" stroke="#c2c2c2" stroke-width="0.9" />
<ellipse cx="23.8" cy="209.31" rx="3.6" ry="2.1" fill="#fafafa" stroke="#c4c4c4" stroke-width="0.6"/>
<circle cx="23.8" cy="209.31" r="1.5" fill="#3a7fd0" />
<rect x="29.8" y="204.81" width="9" height="9.3" fill="#f2f2f2" stroke="#cbcbcb" stroke-width="0.9" />
<path d="M43,208.31 L46,204.81 L49,204.81 L49,207.81" fill="none" stroke="#888" stroke-width="0.7" />
<rect x="41" y="207.81" width="6" height="5.5" fill="#fff" stroke="#999" stroke-width="0.6" />
<rect x="40.3" y="207.51" width="1.6" height="1.6" fill="#3a7fd0" />
<rect x="45.8" y="207.51" width="1.6" height="1.6" fill="#3a7fd0" />
<rect x="40.3" y="212.31" width="1.6" height="1.6" fill="#3a7fd0" />
<rect x="45.8" y="212.31" width="1.6" height="1.6" fill="#3a7fd0" />
<text x="53" y="211.91" font-size="9" fill="#151515" font-weight="bold" textLength="73.9" lengthAdjust="spacingAndGlyphs" >SensorAnalogRight1</text>
<path d="M10,216.79999999999998 L13,219.6 L10,222.4" fill="none" stroke="#666" stroke-width="1" />
<rect x="15" y="219.6" width="3.5" height="0.6" fill="#b0b0b0" />
<rect x="19.3" y="215.1" width="9" height="9.3" fill="#f6f6f6" stroke="#c2c2c2" stroke-width="0.9" />
<ellipse cx="23.8" cy="219.6" rx="3.6" ry="2.1" fill="#fafafa" stroke="#c4c4c4" stroke-width="0.6"/>
<circle cx="23.8" cy="219.6" r="1.5" fill="#3a7fd0" />
<rect x="29.8" y="215.1" width="9" height="9.3" fill="#f2f2f2" stroke="#cbcbcb" stroke-width="0.9" />
<path d="M43,218.6 L46,215.1 L49,215.1 L49,218.1" fill="none" stroke="#888" stroke-width="0.7" />
<rect x="41" y="218.1" width="6" height="5.5" fill="#fff" stroke="#999" stroke-width="0.6" />
<rect x="40.3" y="217.79999999999998" width="1.6" height="1.6" fill="#3a7fd0" />
<rect x="45.8" y="217.79999999999998" width="1.6" height="1.6" fill="#3a7fd0" />
<rect x="40.3" y="222.6" width="1.6" height="1.6" fill="#3a7fd0" />
<rect x="45.8" y="222.6" width="1.6" height="1.6" fill="#3a7fd0" />
<text x="53" y="222.2" font-size="9" fill="#151515" font-weight="bold" textLength="69.7" lengthAdjust="spacingAndGlyphs" >SensorAnalogRight</text>
<path d="M10,227.08999999999997 L13,229.89 L10,232.69" fill="none" stroke="#666" stroke-width="1" />
<rect x="15" y="229.89" width="3.5" height="0.6" fill="#b0b0b0" />
<rect x="19.3" y="225.39" width="9" height="9.3" fill="#f6f6f6" stroke="#c2c2c2" stroke-width="0.9" />
<ellipse cx="23.8" cy="229.89" rx="3.6" ry="2.1" fill="#fafafa" stroke="#c4c4c4" stroke-width="0.6"/>
<circle cx="23.8" cy="229.89" r="1.5" fill="#3a7fd0" />
<rect x="29.8" y="225.39" width="9" height="9.3" fill="#f2f2f2" stroke="#cbcbcb" stroke-width="0.9" />
<path d="M43,228.89 L46,225.39 L49,225.39 L49,228.39" fill="none" stroke="#888" stroke-width="0.7" />
<rect x="41" y="228.39" width="6" height="5.5" fill="#fff" stroke="#999" stroke-width="0.6" />
<rect x="40.3" y="228.08999999999997" width="1.6" height="1.6" fill="#3a7fd0" />
<rect x="45.8" y="228.08999999999997" width="1.6" height="1.6" fill="#3a7fd0" />
<rect x="40.3" y="232.89" width="1.6" height="1.6" fill="#3a7fd0" />
<rect x="45.8" y="232.89" width="1.6" height="1.6" fill="#3a7fd0" />
<text x="53" y="232.48999999999998" font-size="9" fill="#151515" font-weight="bold" textLength="55.6" lengthAdjust="spacingAndGlyphs" >ValveHorizontal</text>
<path d="M10,237.38 L13,240.18 L10,242.98000000000002" fill="none" stroke="#666" stroke-width="1" />
<rect x="15" y="240.18" width="3.5" height="0.6" fill="#b0b0b0" />
<rect x="19.3" y="235.68" width="9" height="9.3" fill="#f6f6f6" stroke="#c2c2c2" stroke-width="0.9" />
<ellipse cx="23.8" cy="240.18" rx="3.6" ry="2.1" fill="#fafafa" stroke="#c4c4c4" stroke-width="0.6"/>
<circle cx="23.8" cy="240.18" r="1.5" fill="#3a7fd0" />
<rect x="29.8" y="235.68" width="9" height="9.3" fill="#f2f2f2" stroke="#cbcbcb" stroke-width="0.9" />
<path d="M43,239.18 L46,235.68 L49,235.68 L49,238.68" fill="none" stroke="#888" stroke-width="0.7" />
<rect x="41" y="238.68" width="6" height="5.5" fill="#fff" stroke="#999" stroke-width="0.6" />
<rect x="40.3" y="238.38" width="1.6" height="1.6" fill="#3a7fd0" />
<rect x="45.8" y="238.38" width="1.6" height="1.6" fill="#3a7fd0" />
<rect x="40.3" y="243.18" width="1.6" height="1.6" fill="#3a7fd0" />
<rect x="45.8" y="243.18" width="1.6" height="1.6" fill="#3a7fd0" />
<text x="53" y="242.78" font-size="9" fill="#151515" font-weight="bold" textLength="52.1" lengthAdjust="spacingAndGlyphs" >TankWithLevel</text>
<rect x="8" y="244.46999999999997" width="0.6" height="6" fill="#b0b0b0" />
<rect x="8" y="250.46999999999997" width="10" height="0.6" fill="#b0b0b0" />
<rect x="19.3" y="245.96999999999997" width="9" height="9.3" fill="#f6f6f6" stroke="#c2c2c2" stroke-width="0.9" />
<ellipse cx="23.8" cy="250.46999999999997" rx="3.6" ry="2.1" fill="#fafafa" stroke="#c4c4c4" stroke-width="0.6"/>
<circle cx="23.8" cy="250.46999999999997" r="1.5" fill="#3a7fd0" />
<rect x="29.8" y="245.96999999999997" width="9" height="9.3" fill="#f2f2f2" stroke="#cbcbcb" stroke-width="0.9" />
<path d="M42,253.96999999999997 L47,253.96999999999997 L47,247.46999999999997" fill="none" stroke="#444" stroke-width="1.3" />
<rect x="40.5" y="252.46999999999997" width="1.5" height="3" fill="#444" />
<rect x="45.5" y="245.96999999999997" width="3" height="1.5" fill="#444" />
<text x="53" y="253.06999999999996" font-size="9" fill="#151515" font-weight="bold" textLength="19.9" lengthAdjust="spacingAndGlyphs" >Pipe1</text>
<rect x="8" y="254.76" width="0.6" height="6" fill="#b0b0b0" />
<rect x="8" y="260.76" width="10" height="0.6" fill="#b0b0b0" />
<rect x="19.3" y="256.26" width="9" height="9.3" fill="#f6f6f6" stroke="#c2c2c2" stroke-width="0.9" />
<ellipse cx="23.8" cy="260.76" rx="3.6" ry="2.1" fill="#fafafa" stroke="#c4c4c4" stroke-width="0.6"/>
<circle cx="23.8" cy="260.76" r="1.5" fill="#3a7fd0" />
<rect x="29.8" y="256.26" width="9" height="9.3" fill="#f2f2f2" stroke="#cbcbcb" stroke-width="0.9" />
<path d="M42,264.26 L47,264.26 L47,257.76" fill="none" stroke="#444" stroke-width="1.3" />
<rect x="40.5" y="262.76" width="1.5" height="3" fill="#444" />
<rect x="45.5" y="256.26" width="3" height="1.5" fill="#444" />
<text x="53" y="263.36" font-size="9" fill="#151515" font-weight="bold" textLength="15.8" lengthAdjust="spacingAndGlyphs" >Pipe</text>
</g>
<rect x="5" y="551.3" width="154" height="9" fill="#f0f0f0" />
<path d="M12,553.3 L9.5,555.8 L12,558.3" fill="none" stroke="#333" stroke-width="1.2" />
<rect x="16" y="551.8" width="102" height="8.2" fill="#cdcdcd" />
<path d="M151.5,553.3 L154,555.8 L151.5,558.3" fill="none" stroke="#333" stroke-width="1.2" />
<text x="6" y="575" font-size="8" fill="#3a5a2a" font-weight="bold" textLength="27.0" lengthAdjust="spacingAndGlyphs" >Explorer</text>
<rect x="6" y="576.3" width="27" height="1.4" fill="#3f5a3a" />
<text x="43" y="575" font-size="8" fill="#9c9c9c" font-weight="normal" textLength="37.0" lengthAdjust="spacingAndGlyphs" >Data Brow...</text>
<text x="83" y="575" font-size="8" fill="#9c9c9c" font-weight="normal" textLength="26.0" lengthAdjust="spacingAndGlyphs" >Symbols</text>
<text x="121" y="575" font-size="8" fill="#9c9c9c" font-weight="normal" textLength="25.0" lengthAdjust="spacingAndGlyphs" >Toolbox</text>
<rect x="163" y="95" width="2" height="486" fill="#cacaca" />
<rect x="163" y="95" width="568" height="1.3" fill="#b4b4b4" />
<rect x="720" y="96" width="10" height="485" fill="#f0f0f0" />
<rect x="165" y="569.4" width="565" height="11" fill="#f0f0f0" />
<rect x="729.5" y="95" width="1.5" height="486" fill="#c8c8c8" />
<rect x="165" y="580" width="566" height="1" fill="#c8c8c8" />
<rect x="724" y="126" width="2" height="431.5" fill="#9a9a9a" />
<rect x="206.7" y="574" width="453" height="2" fill="#9a9a9a" />
<rect x="170.5" y="146.7" width="190" height="72.10000000000002" fill="#fff" stroke="#e2e6ea" stroke-width="1" rx="2.5" />
<path d="M170.5,164.9 L170.5,149.2 Q170.5,146.7 173,146.7 L358,146.7 Q360.5,146.7 360.5,149.2 L360.5,164.9 Z" fill="#d3dfe0" />
<rect x="170.8" y="147" width="54.5" height="17.9" fill="#d8dce3" />
<text x="259" y="160.3" font-size="10.5" fill="#4a4f54" font-weight="normal" textLength="12.0" lengthAdjust="spacingAndGlyphs" >IN</text>
<text x="181" y="183.6" font-size="10.5" fill="#62676c" font-weight="normal" textLength="24.5" lengthAdjust="spacingAndGlyphs" >Pump</text>
<text x="181" y="208" font-size="10.5" fill="#62676c" font-weight="normal" textLength="20.5" lengthAdjust="spacingAndGlyphs" >Valve</text>
<rect x="260.8" y="171.0" width="94.5" height="18.5" fill="#f3f6f8" stroke="#e6e9ec" stroke-width="1" rx="2.5" />
<text x="292.8" y="183.95" font-size="10.5" fill="#2a2a2a" font-weight="bold" textLength="11.5" lengthAdjust="spacingAndGlyphs" >???</text>
<path d="M343.3,177.75 L350.3,177.75 L346.8,181.75 Z" fill="#444" />
<rect x="260.8" y="195.2" width="94.5" height="18.700000000000017" fill="#f3f6f8" stroke="#e6e9ec" stroke-width="1" rx="2.5" />
<text x="287.05" y="208.25" font-size="10.5" fill="#2a2a2a" font-weight="bold" textLength="23.0" lengthAdjust="spacingAndGlyphs" >??????</text>
<path d="M343.3,202.05 L350.3,202.05 L346.8,206.05 Z" fill="#444" />
<rect x="520.7" y="468.7" width="190.39999999999998" height="71.80000000000001" fill="#fff" stroke="#e2e6ea" stroke-width="1" rx="2.5" />
<path d="M520.7,485.6 L520.7,471.2 Q520.7,468.7 523.2,468.7 L708.6,468.7 Q711.1,468.7 711.1,471.2 L711.1,485.6 Z" fill="#d5dde6" />
<text x="605" y="481.5" font-size="10.5" fill="#4a4f54" font-weight="normal" textLength="20.0" lengthAdjust="spacingAndGlyphs" >OUT</text>
<text x="531" y="505" font-size="10.5" fill="#62676c" font-weight="normal" textLength="24.5" lengthAdjust="spacingAndGlyphs" >Pump</text>
<text x="531" y="529.5" font-size="10.5" fill="#62676c" font-weight="normal" textLength="20.5" lengthAdjust="spacingAndGlyphs" >Valve</text>
<rect x="610.7" y="493.0" width="95.29999999999995" height="17.80000000000001" fill="#f2f2f2" stroke="#e6e9ec" stroke-width="1" rx="2.5" />
<text x="643.1" y="505.59999999999997" font-size="10.5" fill="#2a2a2a" font-weight="bold" textLength="11.5" lengthAdjust="spacingAndGlyphs" >???</text>
<path d="M694.0,499.4 L701.0,499.4 L697.5,503.4 Z" fill="#444" />
<rect x="610.7" y="517.2" width="95.29999999999995" height="18.699999999999932" fill="#f2f2f2" stroke="#e6e9ec" stroke-width="1" rx="2.5" />
<text x="637.35" y="530.25" font-size="10.5" fill="#2a2a2a" font-weight="bold" textLength="23.0" lengthAdjust="spacingAndGlyphs" >??????</text>
<path d="M694.0,524.05 L701.0,524.05 L697.5,528.05 Z" fill="#444" />
<rect x="226.6" y="262.4" width="159.9" height="6.0" fill="#3446b4" rx="1.5" />
<rect x="227.4" y="263.59999999999997" width="158.3" height="3.6" fill="#4f6cf2" />
<path d="M239.9,268.4 L239.9,300.2 L303.4,300.2 L303.4,272" fill="none" stroke="#9d9d9d" stroke-width="1" />
<circle cx="271.6" cy="265" r="12.3" fill="#d5dfe3" stroke="#5f666b" stroke-width="1.6" />
<path d="M271.1,253.0 L283.6,265 L271.1,277.0" fill="none" stroke="#5f666b" stroke-width="1.4" />
<rect x="304" y="261" width="30.399999999999977" height="8" fill="#fff" />
<path d="M303,255.0 L319.2,265 L303,275.0 Z" fill="#d5dfe3" stroke="#a6aeb3" stroke-width="1" />
<path d="M335.4,255.0 L319.2,265 L335.4,275.0 Z" fill="#d5dfe3" stroke="#a6aeb3" stroke-width="1" />
<circle cx="319.2" cy="265" r="3.4" fill="#5d6367" />
<circle cx="271.6" cy="310" r="9.5" fill="#d5dfe3" stroke="#a6aeb3" stroke-width="1" />
<text x="269.3" y="314" font-size="9.5" fill="#3a3f44" font-weight="normal" textLength="4.6" lengthAdjust="spacingAndGlyphs" >*</text>
<text x="258" y="331.5" font-size="10" fill="#555b60" font-weight="normal" textLength="26.5" lengthAdjust="spacingAndGlyphs" >* MPa</text>
<text x="253.5" y="344.5" font-size="10" fill="#555b60" font-weight="normal" textLength="37.0" lengthAdjust="spacingAndGlyphs" >*.? m3/h</text>
<rect x="512" y="371.2" width="163" height="6.699999999999989" fill="#3446b4" rx="1.5" />
<rect x="512.8" y="372.4" width="161.4" height="4.299999999999988" fill="#4f6cf2" />
<path d="M545.5,377.9 L545.5,409.7 L608.7,409.7 L608.7,381" fill="none" stroke="#9d9d9d" stroke-width="1" />
<circle cx="577" cy="374.3" r="12.3" fill="#d5dfe3" stroke="#5f666b" stroke-width="1.6" />
<path d="M576.5,362.3 L589.0,374.3 L576.5,386.3" fill="none" stroke="#5f666b" stroke-width="1.4" />
<rect x="609.7" y="370.3" width="30.09999999999991" height="8" fill="#fff" />
<path d="M608.7,364.8 L624.75,374.3 L608.7,383.8 Z" fill="#d5dfe3" stroke="#a6aeb3" stroke-width="1" />
<path d="M640.8,364.8 L624.75,374.3 L640.8,383.8 Z" fill="#d5dfe3" stroke="#a6aeb3" stroke-width="1" />
<circle cx="624.75" cy="374.3" r="3.4" fill="#5d6367" />
<circle cx="577" cy="419.2" r="9.5" fill="#d5dfe3" stroke="#a6aeb3" stroke-width="1" />
<text x="574.7" y="423.2" font-size="9.5" fill="#3a3f44" font-weight="normal" textLength="4.6" lengthAdjust="spacingAndGlyphs" >*</text>
<text x="564" y="440.5" font-size="10" fill="#555b60" font-weight="normal" textLength="26.5" lengthAdjust="spacingAndGlyphs" >* MPa</text>
<text x="558.5" y="453.5" font-size="10" fill="#555b60" font-weight="normal" textLength="37.5" lengthAdjust="spacingAndGlyphs" >*.? m3/h</text>
<rect x="399.6" y="365" width="5" height="63.3" fill="#dfe7ea" stroke="#8d9499" stroke-width="1" rx="2.5" />
<rect x="494.5" y="365" width="5" height="63.3" fill="#dfe7ea" stroke="#8d9499" stroke-width="1" rx="2.5" />
<rect x="447" y="412" width="5.5" height="16.3" fill="#dfe7ea" stroke="#8d9499" stroke-width="1" rx="2.5" />
<path d="M387,390.5 L387,249.6 A62.75,26 0 0 1 512.5,249.6 L512.5,390.5 A62.75,26 0 0 1 387,390.5 Z" fill="#f2f5f8" stroke="#5f666b" stroke-width="1.3" />
<line x1="387" y1="249.6" x2="512.5" y2="249.6" stroke="#5f666b" stroke-width="1.3" />
<line x1="387" y1="390.4" x2="512.5" y2="390.4" stroke="#6d7479" stroke-width="1.1" />
<rect x="399.6" y="365" width="5" height="63.3" fill="#dde7ea" stroke="#7f878c" stroke-width="1" rx="2.5" />
<rect x="494.5" y="365" width="5" height="63.3" fill="#dde7ea" stroke="#7f878c" stroke-width="1" rx="2.5" />
<path d="M425,385 L425,255 A24.7,24.7 0 0 1 474.4,255 L474.4,385 A24.7,24.7 0 0 1 425,385 Z" fill="#5a7cf7" />
<clipPath id="capclip"><path d="M425,385 L425,255 A24.7,24.7 0 0 1 474.4,255 L474.4,385 A24.7,24.7 0 0 1 425,385 Z"/></clipPath>
<rect x="462" y="228" width="3" height="184" fill="#809cf8" clip-path="url(#capclip)"/>
<path d="M425,385 L425,255 A24.7,24.7 0 0 1 474.4,255 L474.4,385 A24.7,24.7 0 0 1 425,385 Z" fill="none" stroke="#5f666b" stroke-width="1.3" />
<line x1="500.6" y1="225" x2="500.6" y2="239" stroke="#7d8489" stroke-width="1" />
<circle cx="500.6" cy="215.4" r="9.5" fill="#d5dfe3" stroke="#a6aeb3" stroke-width="1" />
<text x="498.3" y="219.4" font-size="9.5" fill="#3a3f44" font-weight="normal" textLength="4.6" lengthAdjust="spacingAndGlyphs" >*</text>
<text x="477.5" y="199.5" font-size="10" fill="#555b60" font-weight="normal" textLength="46.0" lengthAdjust="spacingAndGlyphs" >*.?? g/cm3</text>
<line x1="507" y1="264" x2="523" y2="264" stroke="#8d9499" stroke-width="1" />
<circle cx="532.6" cy="264" r="9.5" fill="#d5dfe3" stroke="#a6aeb3" stroke-width="1" />
<text x="530.3000000000001" y="268" font-size="9.5" fill="#3a3f44" font-weight="normal" textLength="4.6" lengthAdjust="spacingAndGlyphs" >*</text>
<text x="518" y="290.5" font-size="10" fill="#555b60" font-weight="normal" textLength="33.5" lengthAdjust="spacingAndGlyphs" >*.? MPa</text>
<line x1="507" y1="309" x2="523" y2="309" stroke="#8d9499" stroke-width="1" />
<circle cx="532.5" cy="309" r="9.5" fill="#d5dfe3" stroke="#a6aeb3" stroke-width="1" />
<text x="530.2" y="313" font-size="9.5" fill="#3a3f44" font-weight="normal" textLength="4.6" lengthAdjust="spacingAndGlyphs" >*</text>
<text x="518" y="334.5" font-size="10" fill="#555b60" font-weight="normal" textLength="25.0" lengthAdjust="spacingAndGlyphs" >*.? °C</text>
<path d="M424,451.3 L475,441.8 L475,454.3 L424,454.3 Z" fill="#5a7cf7" stroke="#4d545c" stroke-width="1.2" />
<text x="440" y="466.5" font-size="10" fill="#555b60" font-weight="normal" textLength="19.5" lengthAdjust="spacingAndGlyphs" >*.?%</text>
<text x="735" y="104.8" font-size="8.5" fill="#a8a8a8" font-weight="normal" textLength="32.0" lengthAdjust="spacingAndGlyphs" >Properties</text>
<path d="M879.5,98.5 L882.5,98.5 L882.5,102.5 L879.5,102.5 Z M878.5,102.5 L883.5,102.5 M881,102.5 L881,105" fill="none" stroke="#999" stroke-width="0.8" />
<path d="M889.5,99.5 L894,104 M894,99.5 L889.5,104" fill="none" stroke="#888" stroke-width="0.9" />
<rect x="735.7" y="111" width="161.3" height="12.3" fill="#f2f2f2" />
<path d="M737.5,112.5 L741.5,112.5 L743.5,114.5 L743.5,121.5 L737.5,121.5 Z" fill="#fff" stroke="#555" stroke-width="0.8" />
<text x="748" y="120.8" font-size="9.3" fill="#111" font-weight="bold" textLength="78.0" lengthAdjust="spacingAndGlyphs" >This Display : Canvas</text>
<rect x="735.5" y="124.5" width="161.5" height="16.5" fill="#f5f5f5" />
<rect x="736" y="125.5" width="14" height="14" fill="#b9d6f2" stroke="#5aa0e0" stroke-width="1" rx="1" />
<rect x="738" y="128" width="3.5" height="3" fill="#fff" stroke="#777" stroke-width="0.6" />
<rect x="742.5" y="128.8" width="5.5" height="1.5" fill="#777" />
<rect x="738" y="134" width="3.5" height="3" fill="#fff" stroke="#777" stroke-width="0.6" />
<rect x="742.5" y="134.8" width="5.5" height="1.5" fill="#777" />
<text x="752.5" y="132" font-size="7" fill="#555" font-weight="bold" textLength="6.0" lengthAdjust="spacingAndGlyphs" >A</text>
<text x="752.5" y="139" font-size="7" fill="#3a6fc0" font-weight="bold" textLength="6.0" lengthAdjust="spacingAndGlyphs" >Z</text>
<path d="M761.5,127.5 L761.5,138 M759.5,136 L761.5,138.5 L763.5,136" fill="none" stroke="#555" stroke-width="0.9" />
<rect x="766" y="126" width="0.8" height="13" fill="#dadada" />
<rect x="769.5" y="125.5" width="14" height="14" fill="#b9d6f2" stroke="#5aa0e0" stroke-width="1" rx="1" />
<rect x="772" y="128.3" width="1.5" height="1.2" fill="#555" />
<rect x="774.5" y="128.3" width="6.5" height="1.2" fill="#555" />
<rect x="772" y="130.9" width="1.5" height="1.2" fill="#555" />
<rect x="774.5" y="130.9" width="6.5" height="1.2" fill="#555" />
<rect x="772" y="133.5" width="1.5" height="1.2" fill="#555" />
<rect x="774.5" y="133.5" width="6.5" height="1.2" fill="#555" />
<rect x="772" y="136.10000000000002" width="1.5" height="1.2" fill="#555" />
<rect x="774.5" y="136.10000000000002" width="6.5" height="1.2" fill="#555" />
<path d="M790,126.5 L786.5,133 L789.5,133 L787.5,139 L792.5,131 L789.5,131 L792,126.5 Z" fill="#f0b020" />
<rect x="796.5" y="126" width="0.8" height="13" fill="#dadada" />
<rect x="800" y="127" width="9" height="11" fill="#f4f4f4" stroke="#cfcfcf" stroke-width="0.8" />
<rect x="801.5" y="129.5" width="6" height="0.8" fill="#d0d0d0" />
<rect x="801.5" y="132.3" width="6" height="0.8" fill="#d0d0d0" />
<rect x="801.5" y="135.1" width="6" height="0.8" fill="#d0d0d0" />
<rect x="734.5" y="141.3" width="162" height="181" fill="#fff" />
<rect x="734.5" y="141.3" width="162" height="381" fill="#fff" stroke="#c8c8c8" stroke-width="1" />
<clipPath id="nameclip"><rect x="749" y="142" width="60.5" height="380"/></clipPath>
<clipPath id="gridclip"><rect x="735" y="142" width="151" height="380"/></clipPath>
<g clip-path="url(#gridclip)">
<rect x="735" y="142" width="14" height="380" fill="#f1f4f9" />
<rect x="735" y="142.3" width="151" height="10.28" fill="#f1f4f9" />
<path d="M738.6,145.60000000000002 L741.3,148.3 L744,145.60000000000002" fill="none" stroke="#333" stroke-width="1.3" />
<text x="751" y="150.20000000000002" font-size="8.6" fill="#111" font-weight="bold" textLength="31.7" lengthAdjust="spacingAndGlyphs" >Common</text>
<rect x="749" y="162.26000000000002" width="137" height="0.6" fill="#eeeeee" />
<rect x="810" y="152.58" width="0.6" height="10.28" fill="#eeeeee" />
<rect x="749" y="152.58" width="61" height="9.68" fill="#f1f4f9" />
<g clip-path="url(#nameclip)">
<text x="751" y="160.48000000000002" font-size="8.6" fill="#262626" font-weight="normal" textLength="22.1" lengthAdjust="spacingAndGlyphs" stroke="#262626" stroke-width="0.2">(Name)</text>
</g>
<rect x="749" y="172.54000000000002" width="137" height="0.6" fill="#eeeeee" />
<rect x="810" y="162.86" width="0.6" height="10.28" fill="#eeeeee" />
<g clip-path="url(#nameclip)">
<text x="751" y="170.76000000000002" font-size="8.6" fill="#262626" font-weight="normal" textLength="12.3" lengthAdjust="spacingAndGlyphs" stroke="#262626" stroke-width="0.2">Title</text>
</g>
<rect x="749" y="182.82000000000002" width="137" height="0.6" fill="#eeeeee" />
<rect x="810" y="173.14000000000001" width="0.6" height="10.28" fill="#eeeeee" />
<g clip-path="url(#nameclip)">
<text x="751" y="181.04000000000002" font-size="8.6" fill="#262626" font-weight="normal" textLength="33.1" lengthAdjust="spacingAndGlyphs" stroke="#262626" stroke-width="0.2">Description</text>
</g>
<path d="M804.5,176.14000000000001 L806.5,176.14000000000001 L808,178.14000000000001 L806.5,180.14000000000001 L804.5,180.14000000000001 Z" fill="#e8b040" />
<rect x="749" y="193.10000000000002" width="137" height="0.6" fill="#eeeeee" />
<rect x="810" y="183.42000000000002" width="0.6" height="10.28" fill="#eeeeee" />
<g clip-path="url(#nameclip)">
<text x="751" y="191.32000000000002" font-size="8.6" fill="#262626" font-weight="normal" textLength="59.7" lengthAdjust="spacingAndGlyphs" stroke="#262626" stroke-width="0.2">DescriptionInToolTip</text>
</g>
<text x="813.3" y="191.32000000000002" font-size="8.6" fill="#2a2a2a" font-weight="normal" textLength="21.0" lengthAdjust="spacingAndGlyphs" stroke="#2a2a2a" stroke-width="0.2">Default</text>
<rect x="749" y="203.38000000000002" width="137" height="0.6" fill="#eeeeee" />
<rect x="810" y="193.70000000000002" width="0.6" height="10.28" fill="#eeeeee" />
<g clip-path="url(#nameclip)">
<text x="751" y="201.60000000000002" font-size="8.6" fill="#262626" font-weight="normal" textLength="36.8" lengthAdjust="spacingAndGlyphs" stroke="#262626" stroke-width="0.2">CustomData</text>
</g>
<rect x="749" y="213.66000000000003" width="137" height="0.6" fill="#eeeeee" />
<rect x="810" y="203.98000000000002" width="0.6" height="10.28" fill="#eeeeee" />
<g clip-path="url(#nameclip)">
<text x="751" y="211.88000000000002" font-size="8.6" fill="#262626" font-weight="normal" textLength="29.1" lengthAdjust="spacingAndGlyphs" stroke="#262626" stroke-width="0.2">Keywords</text>
</g>
<rect x="735" y="214.26" width="151" height="10.28" fill="#f1f4f9" />
<path d="M738.6,217.56 L741.3,220.26 L744,217.56" fill="none" stroke="#333" stroke-width="1.3" />
<text x="751" y="222.16" font-size="8.6" fill="#111" font-weight="bold" textLength="69.5" lengthAdjust="spacingAndGlyphs" >Common - Behavior</text>
<rect x="749" y="234.22000000000003" width="137" height="0.6" fill="#eeeeee" />
<rect x="810" y="224.54000000000002" width="0.6" height="10.28" fill="#eeeeee" />
<g clip-path="url(#nameclip)">
<text x="751" y="232.44000000000003" font-size="8.6" fill="#262626" font-weight="normal" textLength="62.6" lengthAdjust="spacingAndGlyphs" stroke="#262626" stroke-width="0.2">MovesOwnerWindow</text>
</g>
<text x="813.3" y="232.44000000000003" font-size="8.6" fill="#2a2a2a" font-weight="normal" textLength="16.2" lengthAdjust="spacingAndGlyphs" stroke="#2a2a2a" stroke-width="0.2">False</text>
<rect x="735" y="234.82" width="151" height="10.28" fill="#f1f4f9" />
<path d="M738.6,238.12 L741.3,240.82 L744,238.12" fill="none" stroke="#333" stroke-width="1.3" />
<text x="751" y="242.72" font-size="8.6" fill="#111" font-weight="bold" textLength="55.6" lengthAdjust="spacingAndGlyphs" >Common - Style</text>
<rect x="749" y="254.78000000000003" width="137" height="0.6" fill="#eeeeee" />
<rect x="810" y="245.10000000000002" width="0.6" height="10.28" fill="#eeeeee" />
<g clip-path="url(#nameclip)">
<text x="751" y="253.00000000000003" font-size="8.6" fill="#262626" font-weight="normal" textLength="22.4" lengthAdjust="spacingAndGlyphs" stroke="#262626" stroke-width="0.2">Opacity</text>
</g>
<text x="813.3" y="253.00000000000003" font-size="8.6" fill="#2a2a2a" font-weight="normal" textLength="16.9" lengthAdjust="spacingAndGlyphs" stroke="#2a2a2a" stroke-width="0.2">100%</text>
<rect x="749" y="265.05999999999995" width="137" height="0.6" fill="#eeeeee" />
<rect x="810" y="255.38" width="0.6" height="10.28" fill="#eeeeee" />
<g clip-path="url(#nameclip)">
<text x="751" y="263.28000000000003" font-size="8.6" fill="#262626" font-weight="normal" textLength="40.9" lengthAdjust="spacingAndGlyphs" stroke="#262626" stroke-width="0.2">ClipToBounds</text>
</g>
<text x="813.3" y="263.28000000000003" font-size="8.6" fill="#2a2a2a" font-weight="normal" textLength="16.2" lengthAdjust="spacingAndGlyphs" stroke="#2a2a2a" stroke-width="0.2">False</text>
<rect x="749" y="275.3399999999999" width="137" height="0.6" fill="#eeeeee" />
<rect x="810" y="265.65999999999997" width="0.6" height="10.28" fill="#eeeeee" />
<g clip-path="url(#nameclip)">
<text x="751" y="273.56" font-size="8.6" fill="#262626" font-weight="normal" textLength="35.3" lengthAdjust="spacingAndGlyphs" stroke="#262626" stroke-width="0.2">Background</text>
</g>
<rect x="813.5" y="267.65999999999997" width="12" height="7" fill="#fff" stroke="#555" stroke-width="0.8" />
<text x="829" y="274.06" font-size="9.3" fill="#222" font-weight="bold" textLength="51.0" lengthAdjust="spacingAndGlyphs" >255, 255, 255</text>
<rect x="735" y="275.94" width="151" height="10.28" fill="#f1f4f9" />
<path d="M738.6,279.24 L741.3,281.94 L744,279.24" fill="none" stroke="#333" stroke-width="1.3" />
<text x="751" y="283.84000000000003" font-size="8.6" fill="#111" font-weight="bold" textLength="51.2" lengthAdjust="spacingAndGlyphs" >Measurements</text>
<rect x="749" y="295.9" width="137" height="0.6" fill="#eeeeee" />
<rect x="810" y="286.22" width="0.6" height="10.28" fill="#eeeeee" />
<g clip-path="url(#nameclip)">
<text x="751" y="294.12000000000006" font-size="8.6" fill="#262626" font-weight="normal" textLength="16.9" lengthAdjust="spacingAndGlyphs" stroke="#262626" stroke-width="0.2">Width</text>
</g>
<text x="813.3" y="294.12000000000006" font-size="8.6" fill="#1a1a1a" font-weight="bold" textLength="14.7" lengthAdjust="spacingAndGlyphs" stroke="#1a1a1a" stroke-width="0.2">1024</text>
<rect x="749" y="306.17999999999995" width="137" height="0.6" fill="#eeeeee" />
<rect x="810" y="296.5" width="0.6" height="10.28" fill="#eeeeee" />
<g clip-path="url(#nameclip)">
<text x="751" y="304.40000000000003" font-size="8.6" fill="#262626" font-weight="normal" textLength="19.1" lengthAdjust="spacingAndGlyphs" stroke="#262626" stroke-width="0.2">Height</text>
</g>
<text x="813.3" y="304.40000000000003" font-size="8.6" fill="#1a1a1a" font-weight="bold" textLength="11.0" lengthAdjust="spacingAndGlyphs" stroke="#1a1a1a" stroke-width="0.2">768</text>
<rect x="749" y="316.4599999999999" width="137" height="0.6" fill="#eeeeee" />
<rect x="810" y="306.78" width="0.6" height="10.28" fill="#eeeeee" />
<g clip-path="url(#nameclip)">
<text x="751" y="314.68" font-size="8.6" fill="#262626" font-weight="normal" textLength="30.6" lengthAdjust="spacingAndGlyphs" stroke="#262626" stroke-width="0.2">IsScalable</text>
</g>
<text x="813.3" y="314.68" font-size="8.6" fill="#2a2a2a" font-weight="normal" textLength="16.2" lengthAdjust="spacingAndGlyphs" stroke="#2a2a2a" stroke-width="0.2">False</text>
<rect x="749" y="326.73999999999995" width="137" height="0.6" fill="#eeeeee" />
<rect x="810" y="317.06" width="0.6" height="10.28" fill="#eeeeee" />
<g clip-path="url(#nameclip)">
<text x="751" y="324.96000000000004" font-size="8.6" fill="#262626" font-weight="normal" textLength="48.6" lengthAdjust="spacingAndGlyphs" stroke="#262626" stroke-width="0.2">PreferredStretch</text>
</g>
<text x="813.3" y="324.96000000000004" font-size="8.6" fill="#6a3030" font-weight="normal" textLength="23.2" lengthAdjust="spacingAndGlyphs" stroke="#6a3030" stroke-width="0.2">Uniform</text>
<rect x="749" y="337.02" width="137" height="0.6" fill="#eeeeee" />
<rect x="810" y="327.34000000000003" width="0.6" height="10.28" fill="#eeeeee" />
<g clip-path="url(#nameclip)">
<text x="751" y="335.24000000000007" font-size="8.6" fill="#262626" font-weight="normal" textLength="43.8" lengthAdjust="spacingAndGlyphs" stroke="#262626" stroke-width="0.2">MinimumZoom</text>
</g>
<text x="813.3" y="335.24000000000007" font-size="8.6" fill="#1a1a1a" font-weight="bold" textLength="16.9" lengthAdjust="spacingAndGlyphs" stroke="#1a1a1a" stroke-width="0.2">100%</text>
<rect x="749" y="347.29999999999995" width="137" height="0.6" fill="#eeeeee" />
<rect x="810" y="337.62" width="0.6" height="10.28" fill="#eeeeee" />
<g clip-path="url(#nameclip)">
<text x="751" y="345.52000000000004" font-size="8.6" fill="#262626" font-weight="normal" textLength="45.6" lengthAdjust="spacingAndGlyphs" stroke="#262626" stroke-width="0.2">MaximumZoom</text>
</g>
<text x="813.3" y="345.52000000000004" font-size="8.6" fill="#666" font-weight="normal" textLength="20.6" lengthAdjust="spacingAndGlyphs" stroke="#666" stroke-width="0.2">1600%</text>
<rect x="749" y="357.5799999999999" width="137" height="0.6" fill="#eeeeee" />
<rect x="810" y="347.9" width="0.6" height="10.28" fill="#eeeeee" />
<path d="M739.5,350.4 L742.2,353.09999999999997 L739.5,355.79999999999995" fill="none" stroke="#222" stroke-width="1.3" />
<g clip-path="url(#nameclip)">
<text x="751" y="355.8" font-size="8.6" fill="#262626" font-weight="normal" textLength="40.4" lengthAdjust="spacingAndGlyphs" stroke="#262626" stroke-width="0.2">CustomViews</text>
</g>
<rect x="749" y="367.85999999999996" width="137" height="0.6" fill="#eeeeee" />
<rect x="810" y="358.18" width="0.6" height="10.28" fill="#eeeeee" />
<g clip-path="url(#nameclip)">
<text x="751" y="366.08000000000004" font-size="8.6" fill="#262626" font-weight="normal" textLength="87.2" lengthAdjust="spacingAndGlyphs" stroke="#262626" stroke-width="0.2">StoreConfigurationOnChange</text>
</g>
<text x="813.3" y="366.08000000000004" font-size="8.6" fill="#2a2a2a" font-weight="normal" textLength="16.2" lengthAdjust="spacingAndGlyphs" stroke="#2a2a2a" stroke-width="0.2">False</text>
<rect x="735" y="368.46000000000004" width="151" height="10.28" fill="#f1f4f9" />
<path d="M738.6,371.76000000000005 L741.3,374.46000000000004 L744,371.76000000000005" fill="none" stroke="#333" stroke-width="1.3" />
<text x="751" y="376.36000000000007" font-size="8.6" fill="#111" font-weight="bold" textLength="36.1" lengthAdjust="spacingAndGlyphs" >Protection</text>
<rect x="749" y="388.41999999999996" width="137" height="0.6" fill="#eeeeee" />
<rect x="810" y="378.74" width="0.6" height="10.28" fill="#eeeeee" />
<g clip-path="url(#nameclip)">
<text x="751" y="386.64000000000004" font-size="8.6" fill="#262626" font-weight="normal" textLength="43.8" lengthAdjust="spacingAndGlyphs" stroke="#262626" stroke-width="0.2">LoadPassword</text>
</g>
<rect x="749" y="398.69999999999993" width="137" height="0.6" fill="#eeeeee" />
<rect x="810" y="389.02" width="0.6" height="10.28" fill="#eeeeee" />
<g clip-path="url(#nameclip)">
<text x="751" y="396.92" font-size="8.6" fill="#262626" font-weight="normal" textLength="44.2" lengthAdjust="spacingAndGlyphs" stroke="#262626" stroke-width="0.2">SavePassword</text>
</g>
<rect x="735" y="399.3" width="151" height="10.28" fill="#f1f4f9" />
<path d="M738.6,402.6 L741.3,405.3 L744,402.6" fill="none" stroke="#333" stroke-width="1.3" />
<text x="751" y="407.20000000000005" font-size="8.6" fill="#111" font-weight="bold" textLength="29.2" lengthAdjust="spacingAndGlyphs" >Runtime</text>
<rect x="749" y="419.25999999999993" width="137" height="0.6" fill="#eeeeee" />
<rect x="810" y="409.58" width="0.6" height="10.28" fill="#eeeeee" />
<g clip-path="url(#nameclip)">
<text x="751" y="417.48" font-size="8.6" fill="#262626" font-weight="normal" textLength="41.2" lengthAdjust="spacingAndGlyphs" stroke="#262626" stroke-width="0.2">ZoomEnabled</text>
</g>
<text x="813.3" y="417.48" font-size="8.6" fill="#2a2a2a" font-weight="normal" textLength="13.4" lengthAdjust="spacingAndGlyphs" stroke="#2a2a2a" stroke-width="0.2">True</text>
<rect x="749" y="429.53999999999996" width="137" height="0.6" fill="#eeeeee" />
<rect x="810" y="419.86" width="0.6" height="10.28" fill="#eeeeee" />
<g clip-path="url(#nameclip)">
<text x="751" y="427.76000000000005" font-size="8.6" fill="#262626" font-weight="normal" textLength="36.1" lengthAdjust="spacingAndGlyphs" stroke="#262626" stroke-width="0.2">PanEnabled</text>
</g>
<text x="813.3" y="427.76000000000005" font-size="8.6" fill="#2a2a2a" font-weight="normal" textLength="13.4" lengthAdjust="spacingAndGlyphs" stroke="#2a2a2a" stroke-width="0.2">True</text>
<rect x="749" y="439.81999999999994" width="137" height="0.6" fill="#eeeeee" />
<rect x="810" y="430.14" width="0.6" height="10.28" fill="#eeeeee" />
<g clip-path="url(#nameclip)">
<text x="751" y="438.04" font-size="8.6" fill="#262626" font-weight="normal" textLength="29.1" lengthAdjust="spacingAndGlyphs" stroke="#262626" stroke-width="0.2">ScanRate</text>
</g>
<text x="813.3" y="438.04" font-size="8.6" fill="#1a1a1a" font-weight="bold" textLength="11.0" lengthAdjust="spacingAndGlyphs" stroke="#1a1a1a" stroke-width="0.2">500</text>
<rect x="749" y="450.09999999999997" width="137" height="0.6" fill="#eeeeee" />
<rect x="810" y="440.42" width="0.6" height="10.28" fill="#eeeeee" />
<g clip-path="url(#nameclip)">
<text x="751" y="448.32000000000005" font-size="8.6" fill="#262626" font-weight="normal" textLength="55.9" lengthAdjust="spacingAndGlyphs" stroke="#262626" stroke-width="0.2">DesiredFrameRate</text>
</g>
<text x="813.3" y="448.32000000000005" font-size="8.6" fill="#2a2a2a" font-weight="normal" textLength="29.4" lengthAdjust="spacingAndGlyphs" stroke="#2a2a2a" stroke-width="0.2">Automatic</text>
<rect x="749" y="460.37999999999994" width="137" height="0.6" fill="#eeeeee" />
<rect x="810" y="450.7" width="0.6" height="10.28" fill="#eeeeee" />
<g clip-path="url(#nameclip)">
<text x="751" y="458.6" font-size="8.6" fill="#262626" font-weight="normal" textLength="56.2" lengthAdjust="spacingAndGlyphs" stroke="#262626" stroke-width="0.2">ReleaseOutOfView</text>
</g>
<text x="813.3" y="458.6" font-size="8.6" fill="#2a2a2a" font-weight="normal" textLength="16.2" lengthAdjust="spacingAndGlyphs" stroke="#2a2a2a" stroke-width="0.2">False</text>
<rect x="749" y="470.65999999999997" width="137" height="0.6" fill="#eeeeee" />
<rect x="810" y="460.98" width="0.6" height="10.28" fill="#eeeeee" />
<g clip-path="url(#nameclip)">
<text x="751" y="468.88000000000005" font-size="8.6" fill="#262626" font-weight="normal" textLength="39.7" lengthAdjust="spacingAndGlyphs" stroke="#262626" stroke-width="0.2">CachePriority</text>
</g>
<text x="813.3" y="468.88000000000005" font-size="8.6" fill="#2a2a2a" font-weight="normal" textLength="21.3" lengthAdjust="spacingAndGlyphs" stroke="#2a2a2a" stroke-width="0.2">Normal</text>
<rect x="749" y="480.93999999999994" width="137" height="0.6" fill="#eeeeee" />
<rect x="810" y="471.26" width="0.6" height="10.28" fill="#eeeeee" />
<g clip-path="url(#nameclip)">
<text x="751" y="479.16" font-size="8.6" fill="#262626" font-weight="normal" textLength="57.8" lengthAdjust="spacingAndGlyphs" stroke="#262626" stroke-width="0.2">ShowControlCursor</text>
</g>
<text x="813.3" y="479.16" font-size="8.6" fill="#2a2a2a" font-weight="normal" textLength="13.4" lengthAdjust="spacingAndGlyphs" stroke="#2a2a2a" stroke-width="0.2">True</text>
<rect x="749" y="491.2199999999999" width="137" height="0.6" fill="#eeeeee" />
<rect x="810" y="481.53999999999996" width="0.6" height="10.28" fill="#eeeeee" />
<path d="M739.5,484.03999999999996 L742.2,486.73999999999995 L739.5,489.43999999999994" fill="none" stroke="#222" stroke-width="1.3" />
<g clip-path="url(#nameclip)">
<text x="751" y="489.44" font-size="8.6" fill="#262626" font-weight="normal" textLength="60.7" lengthAdjust="spacingAndGlyphs" stroke="#262626" stroke-width="0.2">FocusBorderOptions</text>
</g>
<rect x="749" y="501.49999999999994" width="137" height="0.6" fill="#eeeeee" />
<rect x="810" y="491.82" width="0.6" height="10.28" fill="#eeeeee" />
<g clip-path="url(#nameclip)">
<text x="751" y="499.72" font-size="8.6" fill="#262626" font-weight="normal" textLength="60.0" lengthAdjust="spacingAndGlyphs" stroke="#262626" stroke-width="0.2">DataEntryLostFocus</text>
</g>
<text x="813.3" y="499.72" font-size="8.6" fill="#2a2a2a" font-weight="normal" textLength="16.2" lengthAdjust="spacingAndGlyphs" stroke="#2a2a2a" stroke-width="0.2">False</text>
<rect x="749" y="511.78" width="137" height="0.6" fill="#eeeeee" />
<rect x="810" y="502.09999999999997" width="0.6" height="10.28" fill="#eeeeee" />
<g clip-path="url(#nameclip)">
<text x="751" y="510.0" font-size="8.6" fill="#262626" font-weight="normal" textLength="103.1" lengthAdjust="spacingAndGlyphs" stroke="#262626" stroke-width="0.2">DisableControlWhenNotConnected</text>
</g>
<text x="813.3" y="510.0" font-size="8.6" fill="#2a2a2a" font-weight="normal" textLength="13.4" lengthAdjust="spacingAndGlyphs" stroke="#2a2a2a" stroke-width="0.2">True</text>
<rect x="749" y="522.06" width="137" height="0.6" fill="#eeeeee" />
<rect x="810" y="512.38" width="0.6" height="10.28" fill="#eeeeee" />
<g clip-path="url(#nameclip)">
<text x="751" y="520.28" font-size="8.6" fill="#262626" font-weight="normal" textLength="72.5" lengthAdjust="spacingAndGlyphs" stroke="#262626" stroke-width="0.2">DisableControlWhenBad</text>
</g>
<text x="813.3" y="520.28" font-size="8.6" fill="#2a2a2a" font-weight="normal" textLength="13.4" lengthAdjust="spacingAndGlyphs" stroke="#2a2a2a" stroke-width="0.2">True</text>
</g>
<rect x="886" y="142" width="10.5" height="380" fill="#f0f0f0" />
<path d="M888.5,149 L891,146.5 L893.5,149" fill="none" stroke="#444" stroke-width="0.9" />
<rect x="886.5" y="152.6" width="9.5" height="164.5" fill="#cdcdcd" />
<path d="M888.5,515.5 L891,518 L893.5,515.5" fill="none" stroke="#444" stroke-width="0.9" />
<rect x="735" y="526" width="161.5" height="36.2" fill="#f0f0f0" stroke="#b8b8b8" stroke-width="1" />
<text x="738" y="534.3" font-size="9.2" fill="#111" font-weight="bold" textLength="23.0" lengthAdjust="spacingAndGlyphs" >(Name)</text>
<text x="738" y="544" font-size="8" fill="#2a2a2a" font-weight="normal" textLength="109.0" lengthAdjust="spacingAndGlyphs" >Unique string identifier for this object.</text>
<text x="737.1" y="575" font-size="8" fill="#3a5a2a" font-weight="bold" textLength="32.9" lengthAdjust="spacingAndGlyphs" >Properties</text>
<rect x="737.1" y="576.3" width="33" height="1.4" fill="#3f5a3a" />
<text x="787.5" y="575" font-size="8" fill="#a8a8a8" font-weight="normal" textLength="30.7" lengthAdjust="spacingAndGlyphs" >Dynamics</text>
<text x="836.2" y="575" font-size="8" fill="#a8a8a8" font-weight="normal" textLength="38.4" lengthAdjust="spacingAndGlyphs" >Preferences</text>
<rect x="1" y="581" width="898" height="19" fill="#cfdbcb" />
<rect x="1" y="600" width="898" height="1" fill="#e4ecdc" />
<text x="546" y="593.8" font-size="8" fill="#333" font-weight="normal" textLength="33.0" lengthAdjust="spacingAndGlyphs" >0 Selected</text>
<rect x="585.5" y="585.8" width="84.5" height="11.5" fill="#f3f6f2" stroke="#dfe6dc" stroke-width="0.6" />
<rect x="590" y="587.5" width="7.5" height="5.5" fill="#3a7fd0" stroke="#555" stroke-width="0.5" />
<rect x="592.5" y="593" width="2.5" height="2" fill="#555" />
<text x="599" y="593.8" font-size="8" fill="#333" font-weight="normal" textLength="61.0" lengthAdjust="spacingAndGlyphs" >Mode: Desktop App</text>
<path d="M665.25,590.5 L668.75,590.5 L667,592.5 Z" fill="#333" />
<rect x="676.7" y="585.8" width="54.5" height="11.5" fill="#f3f6f2" stroke="#dfe6dc" stroke-width="0.6" />
<path d="M680.5,590 L680.5,588.5 A2.5,2.5 0 0 1 685.5,588.5 L685.5,590" fill="none" stroke="#e8b040" stroke-width="1.1" />
<rect x="679.5" y="590" width="7" height="6" fill="#f2c050" />
<text x="689" y="593.8" font-size="8" fill="#333" font-weight="normal" textLength="42.0" lengthAdjust="spacingAndGlyphs" >Administrator</text>
<rect x="738.4" y="584" width="40.6" height="13.4" fill="#fff" stroke="#c0c6bd" stroke-width="0.8" />
<text x="740.5" y="594" font-size="8.8" fill="#333" font-weight="normal" textLength="17.0" lengthAdjust="spacingAndGlyphs" >100%</text>
<path d="M772.0,590.6 L775.0,590.6 L773.5,592.4 Z" fill="#888" />
<rect x="785.5" y="589.3" width="6" height="2.6" fill="#fff" stroke="#6a8a5a" stroke-width="0.9" />
<rect x="794" y="590" width="64" height="1.4" fill="#7b9a6b" />
<rect x="825.5" y="587" width="1.5" height="7" fill="#f4f8f2" />
<path d="M864.5,587 L864.5,594 M861,590.5 L868,590.5" fill="none" stroke="#6a8a5a" stroke-width="2.2" />
<path d="M864.5,587.8 L864.5,593.2 M861.8,590.5 L867.2,590.5" fill="none" stroke="#fff" stroke-width="0.8" />
<rect x="875" y="585" width="9.5" height="10.5" fill="#dbe8f6" stroke="#5a8fd0" stroke-width="0.9" />
<path d="M876.5,586.5 L883,594 M883,586.5 L876.5,594" fill="none" stroke="#3a7fd0" stroke-width="1.3" stroke-dasharray="1.5,1"/>
</svg>
</body></html>
